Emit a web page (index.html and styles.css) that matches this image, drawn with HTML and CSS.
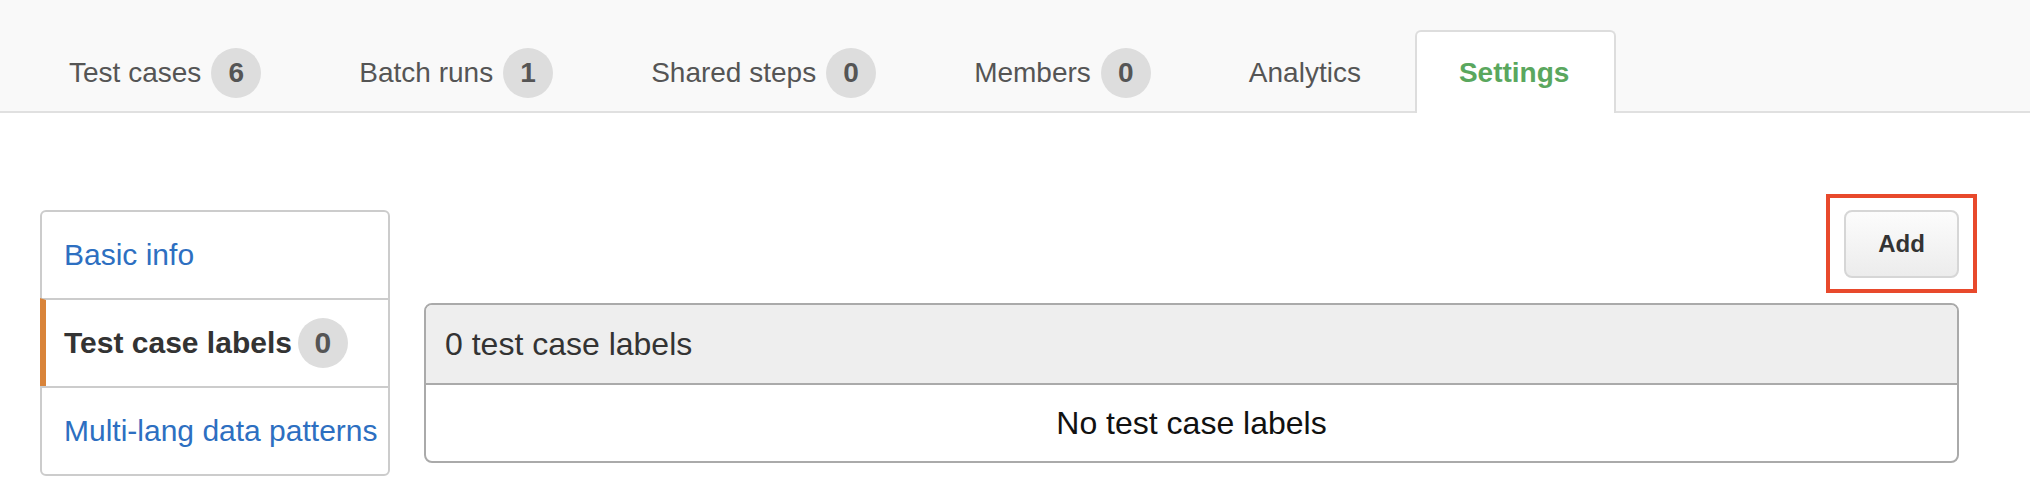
FILE: index.html
```html
<!DOCTYPE html>
<html lang="en">
<head>
<meta charset="utf-8">
<title>Settings - Test case labels</title>
<link rel="stylesheet" href="styles.css">
</head>
<body>
<header class="tabbar">
  <ul class="tabs">
    <li class="tab"><span>Test cases</span><span class="badge">6</span></li>
    <li class="tab"><span>Batch runs</span><span class="badge">1</span></li>
    <li class="tab"><span>Shared steps</span><span class="badge">0</span></li>
    <li class="tab"><span>Members</span><span class="badge">0</span></li>
    <li class="tab"><span>Analytics</span></li>
    <li class="tab active"><span>Settings</span></li>
  </ul>
</header>
<div class="page">
  <nav class="sidebar">
    <a class="side-item">Basic info</a>
    <a class="side-item active">Test case labels<span class="badge">0</span></a>
    <a class="side-item">Multi-lang data patterns</a>
  </nav>
  <main class="main">
    <div class="toolbar">
      <span class="highlight"><button class="btn" type="button">Add</button></span>
    </div>
    <section class="panel">
      <div class="panel-head">0 test case labels</div>
      <div class="panel-body">No test case labels</div>
    </section>
  </main>
</div>
</body>
</html>
```
FILE: styles.css
```css
* {
  box-sizing: border-box;
}

body {
  margin: 0;
  background: #ffffff;
  font-family: "Liberation Sans", Arial, Helvetica, sans-serif;
  color: #333333;
}

/* ---------- top tabs ---------- */
.tabbar {
  height: 113px;
  background: #f9f9f9;
  border-bottom: 2px solid #e0e0e0;
  display: flex;
  align-items: flex-end;
  padding-left: 25px;
}

.tabs {
  display: flex;
  gap: 10px;
  list-style: none;
  margin: 0 0 -2px 0;
  padding: 0;
}

.tab {
  display: flex;
  align-items: center;
  height: 83px;
  padding: 0 42px;
  border: 2px solid transparent;
  border-bottom: none;
  border-radius: 6px 6px 0 0;
  font-size: 28px;
  color: #555555;
}

.tab.active {
  background: #ffffff;
  border-color: #dddddd;
  color: #5aa75e;
  font-weight: bold;
  min-width: 201px;
}

.badge {
  display: inline-flex;
  align-items: center;
  justify-content: center;
  width: 50px;
  height: 50px;
  margin-left: 10px;
  border-radius: 50%;
  background: #dddddd;
  color: #555555;
  font-weight: bold;
}

/* ---------- page ---------- */
.page {
  display: flex;
  align-items: flex-start;
  gap: 34px;
  padding: 97px 71px 0 40px;
}

.sidebar {
  width: 350px;
  flex: none;
  display: flex;
  flex-direction: column;
  border: 2px solid #cccccc;
  border-radius: 6px;
}

.side-item {
  display: flex;
  align-items: center;
  height: 86px;
  padding-left: 22px;
  font-size: 30px;
  color: #2d6fc1;
  white-space: nowrap;
}

.side-item + .side-item {
  height: 88px;
  border-top: 2px solid #cccccc;
}

.side-item.active {
  margin-left: -2px;
  padding-left: 18px;
  border-left: 6px solid #d9843a;
  color: #333333;
  font-weight: bold;
}

.side-item.active .badge {
  margin-left: 6px;
  font-size: 30px;
}

.main {
  flex: 1;
  display: flex;
  flex-direction: column;
}

.toolbar {
  display: flex;
  justify-content: flex-end;
  margin-bottom: 25px;
}

.highlight {
  position: relative;
  display: inline-flex;
}

.highlight::after {
  content: "";
  position: absolute;
  top: -16px;
  bottom: -15px;
  left: -18px;
  right: -18px;
  border: 4px solid #e8492c;
  pointer-events: none;
}

.btn {
  width: 115px;
  height: 68px;
  border: 2px solid #d6d6d6;
  border-radius: 8px;
  background: linear-gradient(#fcfcfc, #ececec);
  font-family: inherit;
  font-size: 24px;
  font-weight: bold;
  color: #333333;
}

.panel {
  border: 2px solid #aaaaaa;
  border-radius: 8px;
  overflow: hidden;
}

.panel-head {
  display: flex;
  align-items: center;
  height: 80px;
  padding-left: 19px;
  background: #eeeeee;
  border-bottom: 2px solid #aaaaaa;
  font-size: 32px;
  color: #333333;
}

.panel-body {
  display: flex;
  align-items: center;
  justify-content: center;
  height: 76px;
  font-size: 32px;
  color: #111111;
}
```
